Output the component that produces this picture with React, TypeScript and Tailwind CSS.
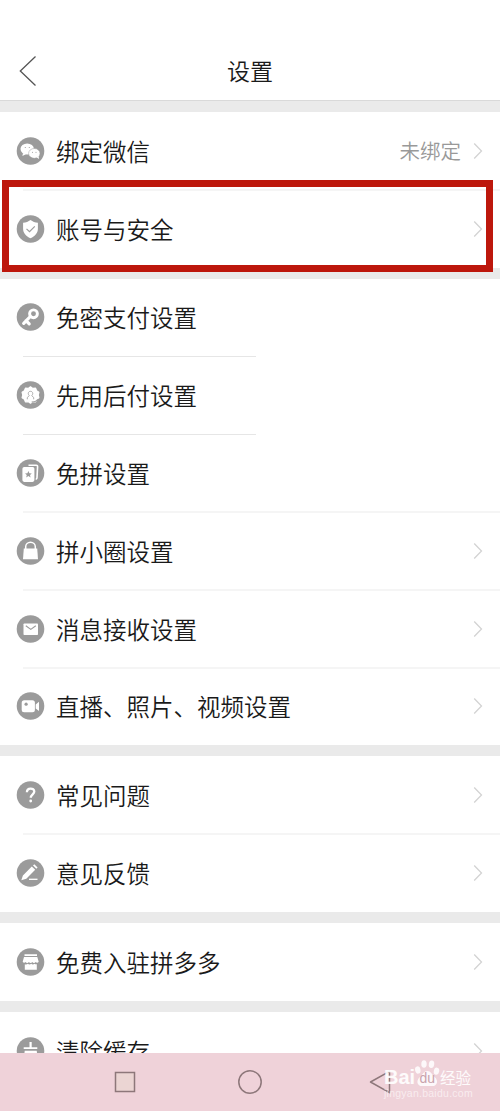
import type { ReactNode } from "react";

type Item = {
  label: string;
  icon: ReactNode;
  value?: string;
  arrow?: boolean;
  divider?: "short" | "full";
};

const G = "#9b9b9b";

const icons = {
  wechat: (
    <>
      <ellipse cx="10.700" cy="12" rx="6.700" ry="5.600" />
      <path d="M6.500 16l-.6 3 3.500-1.700z" />
      <ellipse cx="17.800" cy="16.400" rx="5.700" ry="4.900" stroke={G} strokeWidth="0.500" />
      <path d="M20 20.300l2.500 1.600-.4-2.800z" />
      <g fill={G}>
        <circle cx="8.800" cy="10.500" r="0.600" />
        <circle cx="12.800" cy="10.500" r="0.600" />
        <circle cx="16" cy="15.200" r="0.550" />
        <circle cx="19.500" cy="15.200" r="0.550" />
      </g>
    </>
  ),
  shield: (
    <>
      <path d="M14 5c2.200 1.700 4.500 2.500 7.400 2.700v6c0 4.300-2.900 7.300-7.400 9.600-4.500-2.300-7.400-5.300-7.400-9.600v-6C9.500 7.500 11.800 6.700 14 5z" />
      <path d="M10 13.900l3 2.700 5.300-5.200" fill="none" stroke={G} strokeWidth="1.200" />
    </>
  ),
  key: (
    <>
      <circle cx="17" cy="10.800" r="3.900" fill="none" stroke="#fff" strokeWidth="2.900" />
      <path d="M13.800 13.500L7.200 20.300M9.500 17.700l3.200 3.200" fill="none" stroke="#fff" strokeWidth="3.200" strokeLinecap="round" />
    </>
  ),
  badge: (
    <>
      <path
        d="M14 5.800l2.300 1.600 2.800-.2 1 2.600 2.300 1.500-.7 2.700.7 2.700-2.300 1.500-1 2.600-2.800-.2L14 22.200l-2.300-1.600-2.800.2-1-2.600-2.300-1.500.7-2.700-.7-2.700 2.300-1.500 1-2.600 2.800.2z"
        stroke="#fff"
        strokeWidth="1.200"
        strokeLinejoin="round"
      />
      <path d="M10.800 18.300v-1.600l1.900-2.200c-1.700-1.500-1-4.200 1.300-4.200s3 2.700 1.300 4.200l1.900 2.200v1.600" fill="none" stroke={G} strokeWidth="0.800" />
      <path d="M15.200 20.900c2 .5 4-.2 6-2.400" fill="none" stroke={G} strokeWidth="1.100" />
    </>
  ),
  cards: (
    <>
      <path d="M12 6.200h7.800a1.300 1.300 0 0 1 1.300 1.400l-.6 11.200a1.200 1.200 0 0 1-1.300 1.200" fill="none" stroke="#fff" strokeWidth="1.600" />
      <rect x="5.900" y="7.900" width="12" height="15" rx="1.800" />
      <path d="M11.900 12l1 2.200 2.400.2-1.800 1.600.6 2.400-2.200-1.300-2.200 1.300.6-2.400-1.800-1.600 2.400-.2z" fill={G} />
    </>
  ),
  lock: (
    <>
      <path d="M7.300 11.500h13.400l.8 10.700h-15z" />
      <path d="M9.200 12.500V9.700a4.800 4.500 0 0 1 9.600 0v2.800" fill="none" stroke="#fff" strokeWidth="1.500" />
    </>
  ),
  mail: (
    <>
      <rect x="7" y="8.500" width="14.500" height="11.500" rx="0.800" />
      <path d="M9.300 10.700l5 3.700 5-3.700" fill="none" stroke={G} strokeWidth="1.100" />
    </>
  ),
  video: (
    <>
      <rect x="5.200" y="8.200" width="13.200" height="12" rx="2.500" />
      <path d="M19.200 12.500l3.300-2.700v9.300l-3.300-2.700z" />
      <circle cx="9.600" cy="12.200" r="1.600" fill={G} />
    </>
  ),
  help: (
    <>
      <path d="M10.400 11.300c0-5 7.400-4.800 7.400-.7 0 2.700-3.500 2.900-3.500 6.200" fill="none" stroke="#fff" strokeWidth="2.300" />
      <circle cx="14.200" cy="20" r="1.400" />
    </>
  ),
  edit: (
    <>
      <path d="M15.300 7.500l3.400 3.300-8.900 9-5 1.500 1.600-4.900zM16.500 6.500l1.300-1.300 3.300 3.300-1.300 1.300z" />
      <path d="M12.500 20.300h8.500" stroke="#fff" strokeWidth="1.300" />
    </>
  ),
  shop: (
    <>
      <path d="M8 6.300h12.500v1.700H8zM7.500 9h13.300l1.400 4.700c-.7 1.300-2.300 1.300-3 .2-.9 1.500-2.600 1.500-3.400 0-.9 1.500-2.600 1.500-3.400 0-.9 1.500-2.500 1.500-3.400 0-.7 1.100-2.100 1.100-2.800-.2z" />
      <path d="M8.300 16.200c1.400.5 2.600 0 3-.5 1 .9 2.600.9 3.400 0 .9.900 2.400.9 3.400 0 .5.500 1.400.8 2.200.5v5.500H8.300z" />
    </>
  ),
  clean: (
    <>
      <path d="M13 5h2.200v5.200h5.600v1.900H7.200v-1.900H13z" />
      <path d="M8.200 13.700h12l1 8.300H7.200z" />
    </>
  ),
};

const groups: Item[][] = [
  [
    { label: "绑定微信", icon: icons.wechat, value: "未绑定", arrow: true, divider: "full" },
    { label: "账号与安全", icon: icons.shield, arrow: true },
  ],
  [
    { label: "免密支付设置", icon: icons.key, divider: "short" },
    { label: "先用后付设置", icon: icons.badge, divider: "short" },
    { label: "免拼设置", icon: icons.cards, divider: "full" },
    { label: "拼小圈设置", icon: icons.lock, arrow: true, divider: "full" },
    { label: "消息接收设置", icon: icons.mail, arrow: true, divider: "full" },
    { label: "直播、照片、视频设置", icon: icons.video, arrow: true },
  ],
  [
    { label: "常见问题", icon: icons.help, arrow: true, divider: "full" },
    { label: "意见反馈", icon: icons.edit, arrow: true },
  ],
  [{ label: "免费入驻拼多多", icon: icons.shop, arrow: true }],
  [{ label: "清除缓存", icon: icons.clean, arrow: true }],
];

function Row({ item }: { item: Item }) {
  return (
    <div className="h-[77.8px] flex flex-col">
      <div className="flex-1 flex items-center pl-4 pr-[17px]">
        <svg className="w-[29px] h-7 shrink-0" viewBox="-0.5 0 29 28" fill="#fff">
          <circle cx="14" cy="14" r="13.800" fill={G} />
          {item.icon}
        </svg>
        <span className="ml-[11px] flex-1 text-[23.500px] leading-8 font-[350] text-[#1a1a1a] whitespace-nowrap">{item.label}</span>
        {item.value && <span className="mr-3 pb-px text-[20.500px] leading-8 font-[350] text-[#999]">{item.value}</span>}
        {item.arrow && (
          <svg className="w-2.5 h-[18px] shrink-0" viewBox="0 0 10 18" fill="none" stroke="#d3d3d3" strokeWidth="1.300">
            <path d="M1.200 1.500L8.500 9 1.200 16.500" />
          </svg>
        )}
      </div>
      {item.divider === "full" && <div className="h-px -mt-px translate-y-[0.500px] ml-[23px] bg-[#ececec]" />}
      {item.divider === "short" && <div className="h-px -mt-px translate-y-px ml-[23px] w-[233px] bg-[#e6e6e6]" />}
    </div>
  );
}

function Watermark() {
  return (
    <div className="absolute left-[384px] top-[2px] w-[92px] text-white/90 font-['Liberation_Sans',sans-serif]">
      <div className="flex items-end h-[34px]">
        <span className="w-[30px] text-[20px] leading-[20px] font-bold pb-[2px]">Bai</span>
        <div className="relative w-[26px] h-[32px] mb-px">
          <svg className="w-[26px] h-[32px]" viewBox="0 0 26 32" fill="#fff" fillOpacity="0.850">
            <ellipse cx="3.800" cy="14" rx="2.700" ry="3.700" transform="rotate(-12 3.800 14)" />
            <ellipse cx="10" cy="8" rx="2.700" ry="3.800" />
            <ellipse cx="17.500" cy="8.200" rx="2.700" ry="3.800" transform="rotate(10 17.500 8.200)" />
            <ellipse cx="22.500" cy="15.200" rx="2.700" ry="3.600" transform="rotate(12 22.500 15.200)" />
            <path d="M13.300 15c3.500 0 4.500 3.400 7.400 5.900 4.500 4.200 1.800 9.100-2 9.100h-10.800c-4.200 0-6.600-4.900-2-9.100 3-2.500 3.900-5.900 7.400-5.900z" />
          </svg>
          <span className="absolute left-[5.500px] top-[15px] text-[14px] leading-[14px] text-[#c9a3ac]">du</span>
        </div>
        <span className="text-[15.500px] leading-[20px] pb-[2px] whitespace-nowrap font-['Noto_Sans_CJK_SC',sans-serif]">经验</span>
      </div>
      <div className="-mt-0.5 text-[10.500px] leading-3 tracking-[0.250px] text-white/60 whitespace-nowrap">jingyan.baidu.com</div>
    </div>
  );
}

function NavBar() {
  return (
    <nav className="absolute inset-x-0 bottom-0 h-[58px] bg-[#efd2d9]">
      <svg className="block w-[500px] h-[58px]" viewBox="0 0 500 58" fill="none" stroke="#8d777a" strokeWidth="1.500">
        <rect x="115.500" y="19.500" width="19" height="19" fill="#ebd5d3" />
        <circle cx="250" cy="29" r="11.200" />
        <path d="M370.500 29l19-10.700v21.400z" strokeLinejoin="round" />
      </svg>
      <Watermark />
    </nav>
  );
}

export default function App() {
  return (
    <div className="relative w-[500px] h-[1111px] overflow-hidden bg-white font-['Noto_Sans_CJK_SC',sans-serif]">
      <header className="h-[100px] pt-[41px] grid grid-cols-[1fr_auto_1fr] items-center">
        <svg className="ml-[19px] w-[18px] h-8" viewBox="0 0 18 32" fill="none" stroke="#555" strokeWidth="1.300">
          <path d="M16.500 1.500L1.300 16 16.500 30.500" />
        </svg>
        <h1 className="pb-0.5 text-[23px] leading-8 font-[350] text-[#1a1a1a]">设置</h1>
      </header>
      <main>
        {groups.map((group, i) => (
          <section key={i}>
            <div
              className={
                i === 0 ? "h-3 bg-[#eaeaea] border-t border-[#d9d9d9]" : "h-[11px] bg-[#eaeaea]"
              }
            />
            {group.map((item) => (
              <Row key={item.label} item={item} />
            ))}
          </section>
        ))}
      </main>
      <div className="absolute left-[2px] top-[180px] w-[491px] h-[91.500px] border-[7.500px] border-[#bd170c]" />
      <NavBar />
    </div>
  );
}
